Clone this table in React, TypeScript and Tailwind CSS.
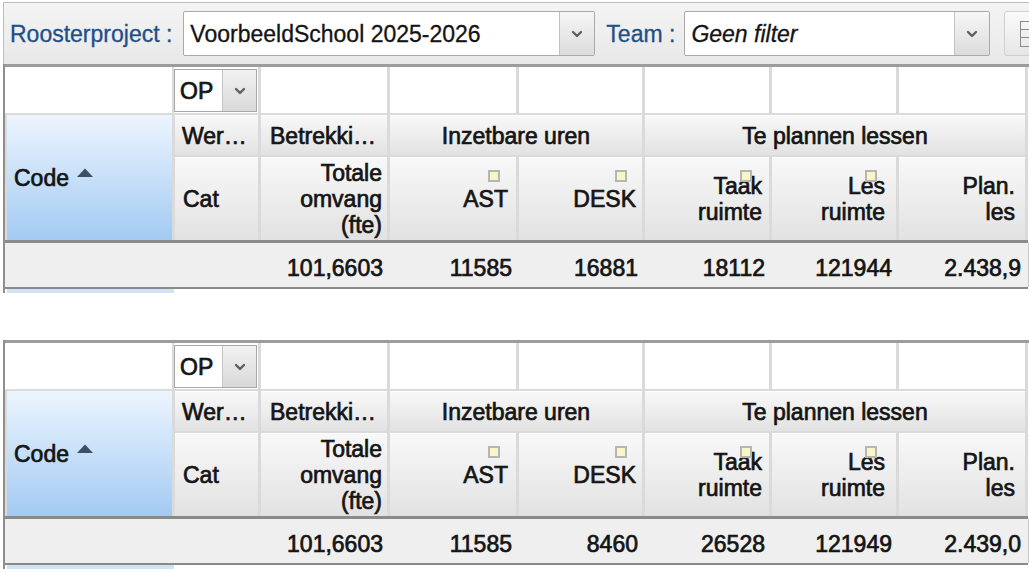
import { ChevronDown } from "lucide-react";

function Chevron() {
  return <ChevronDown size={16} strokeWidth={3.6} className="text-[#5e5e5e]" />;
}

function Square({ right }: { right: string }) {
  return (
    <div
      className={`absolute top-[12px] ${right} w-[12px] h-[12px] border-2 border-[#b5b5b5] bg-[#f8f5c6]`}
    />
  );
}

const hdr =
  "bg-gradient-to-b from-[#f8f8f8] to-[#e2e2e2] border-t border-white flex items-center";

function Table({ totals }: { totals: string[] }) {
  return (
    <div className="ml-[3px] border-l-2 border-[#8e8e8e] w-[1026px] [-webkit-text-stroke:0.7px_currentColor]">
      <div className="h-[3px] bg-[#9c9c9c]" />
      <div className="grid grid-cols-[167px_83px_126px_126px_123px_124px_124px_126px] grid-rows-[46px_40px_83px] gap-x-[3px] gap-y-[2px] bg-[#dadada] pr-[3px] w-[1023px]">
        {/* filter row */}
        <div className="bg-white" />
        <div className="bg-white pt-[2px] pb-[1px] -ml-[1px] pr-[1px]">
          <div className="h-full flex border border-[#a8a8a8] bg-white">
            <div className="flex-1 flex items-center pl-[5px]">OP</div>
            <div className="w-[34px] flex items-center justify-center border-l border-[#c4c4c4] bg-gradient-to-b from-[#f2f2f2] to-[#d9d9d9] [-webkit-text-stroke:0]">
              <Chevron />
            </div>
          </div>
        </div>
        <div className="bg-white" />
        <div className="bg-white" />
        <div className="bg-white" />
        <div className="bg-white" />
        <div className="bg-white" />
        <div className="bg-white" />

        {/* code cell */}
        <div className="row-span-2 bg-gradient-to-b from-[#ecf5fe] to-[#a3caf3] flex items-center pl-[7px] pt-[1px] ml-[2px]">
          <span>Code</span>
          <svg width="16" height="9" viewBox="0 0 16 9" className="ml-[8px] -mt-[12px]">
            <polygon points="0,9 8,0.5 16,9" fill="#3c5064" />
          </svg>
        </div>

        {/* group header */}
        <div className={`${hdr} pl-[7px]`}>Wer…</div>
        <div className={`${hdr} pl-[9px]`}>Betrekki…</div>
        <div className={`${hdr} col-span-2 justify-center`}>Inzetbare uren</div>
        <div className={`${hdr} col-span-3 justify-center`}>Te plannen lessen</div>

        {/* sub header */}
        <div className={`${hdr} pl-[8px]`}>Cat</div>
        <div className={`${hdr} justify-end pr-[5px] text-right`}>
          <div>
            Totale
            <br />
            omvang
            <br />
            (fte)
          </div>
        </div>
        <div className={`${hdr} relative justify-end pr-[8px]`}>
          <Square right="right-[16px]" />
          AST
        </div>
        <div className={`${hdr} relative justify-end pr-[6px]`}>
          <Square right="right-[15px]" />
          DESK
        </div>
        <div className={`${hdr} relative justify-end pr-[7px] text-right`}>
          <Square right="right-[17px]" />
          <div>
            Taak
            <br />
            ruimte
          </div>
        </div>
        <div className={`${hdr} relative justify-end pr-[11px] text-right`}>
          <Square right="right-[19px]" />
          <div>
            Les
            <br />
            ruimte
          </div>
        </div>
        <div className={`${hdr} justify-end pr-[10px] text-right`}>
          <div>
            Plan.
            <br />
            les
          </div>
        </div>
      </div>
      <div className="h-[3px] bg-[#8a8a8a] w-[1023px]" />
      <div className="h-[44px] pt-[5px] bg-[#efefef] w-[1023px] grid grid-cols-[253px_126px_126px_123px_124px_124px_126px] gap-x-[3px] items-center text-right shadow-[2px_0_0_#c8c8c8]">
        <div />
        {totals.map((t, i) => (
          <div key={i} className="pr-[4px]">
            {t}
          </div>
        ))}
      </div>
      <div className="h-[2px] bg-[#8a8a8a] w-[1023px]" />
      <div className="h-[4px] flex">
        <div className="w-[167px] ml-[2px] bg-[#cfe2f7]" />
      </div>
    </div>
  );
}

export default function App() {
  return (
    <div className="w-[1029px] h-[572px] overflow-hidden bg-white text-[23px] leading-[26px] text-[#141414] font-['Liberation_Sans',Arial,sans-serif]">
      {/* toolbar */}
      <div className="mt-[2px] ml-[3px] w-[1040px] h-[62px] border-t border-l border-[#bdbdbd] bg-gradient-to-b from-[#f4f4f4] to-[#e8e8e8] flex items-center pl-[6px] whitespace-nowrap [-webkit-text-stroke:0.3px_currentColor]">
        <span className="shrink-0 text-[#1e4f88]">Roosterproject :</span>
        <div className="shrink-0 ml-[11px] w-[412px] h-[45px] border border-[#a9a9a9] rounded-[2px] bg-white flex">
          <div className="flex-1 flex items-center pl-[6px]">VoorbeeldSchool 2025-2026</div>
          <div className="w-[35px] border-l border-[#c2c2c2] bg-gradient-to-b from-[#f6f6f6] to-[#dcdcdc] flex items-center justify-center">
            <Chevron />
          </div>
        </div>
        <span className="shrink-0 ml-[11px] text-[#1e4f88]">Team :</span>
        <div className="shrink-0 ml-[9px] w-[306px] h-[45px] border border-[#a9a9a9] rounded-[2px] bg-white flex">
          <div className="flex-1 flex items-center pl-[6px] italic">Geen filter</div>
          <div className="w-[35px] border-l border-[#c2c2c2] bg-gradient-to-b from-[#f6f6f6] to-[#dcdcdc] flex items-center justify-center">
            <Chevron />
          </div>
        </div>
        <div className="ml-[14px] w-[44px] h-[45px] shrink-0 border border-[#cfcfcf] rounded-[3px] bg-gradient-to-b from-[#fafafa] to-[#e6e6e6] flex items-center pl-[15px]">
          <div className="w-[14px] h-[26px] border border-[#8a8a8a] flex flex-col">
            <div className="flex-1 border-b border-[#8a8a8a]" />
            <div className="flex-1 border-b border-[#8a8a8a]" />
            <div className="flex-1" />
          </div>
        </div>
      </div>

      <Table totals={["101,6603", "11585", "16881", "18112", "121944", "2.438,9"]} />
      <div className="h-[47px]" />
      <Table totals={["101,6603", "11585", "8460", "26528", "121949", "2.439,0"]} />
    </div>
  );
}
